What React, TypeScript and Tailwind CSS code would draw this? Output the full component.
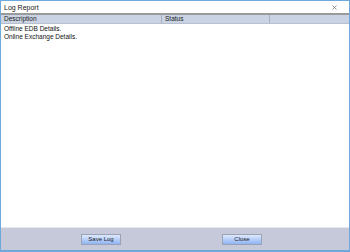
import React from 'react';
import { X } from 'lucide-react';

const ROWS = ['Offline EDB Details.', 'Online Exchange Details.'];

export default function App() {
  return (
    <div className="w-[350px] h-[252px] flex flex-col bg-[#6fa8dc] px-px pt-px pb-[2px] text-black" style={{ fontFamily: '"Liberation Sans", Arial, sans-serif' }}>
      {/* title bar */}
      <div className="h-[12px] bg-white flex items-center justify-between pl-[3px] pr-[11px]">
        <span className="text-[7px] leading-none text-[#222]">Log Report</span>
        <X className="w-[7px] h-[7px] text-[#555]" strokeWidth={2} />
      </div>

      {/* list */}
      <div className="flex-1 flex flex-col bg-white border-t-[2px] border-[#9a9a9a]">
        <div className="h-[9px] flex bg-[#c9d3e4] border-b border-[#b8c0cf] text-[6.5px] leading-none text-[#222]">
          <div className="w-[161px] flex items-center pl-[3px] border-r border-[#a9b0be]">Description</div>
          <div className="w-[108px] flex items-center pl-[3px] border-r border-[#a9b0be]">Status</div>
          <div className="flex-1" />
        </div>
        <div className="flex flex-col pt-[1px] pl-[3px] text-[6.5px] leading-[8px] text-[#111]">
          {ROWS.map(r => (
            <span key={r}>{r}</span>
          ))}
        </div>
      </div>

      {/* footer */}
      <div className="h-[23px] shrink-0 bg-[#c5c9d9] border-t border-[#e6e8ee] flex items-center">
        <div className="w-[80px]" />
        <button className="w-[40px] h-[11px] border border-[#9aa3b5] bg-gradient-to-b from-[#dfe9fb] to-[#8fb4f3] text-[6px] leading-none text-[#222]">Save Log</button>
        <div className="w-[101px]" />
        <button className="w-[40px] h-[11px] border border-[#9aa3b5] bg-gradient-to-b from-[#dfe9fb] to-[#8fb4f3] text-[6px] leading-none text-[#222]">Close</button>
      </div>
    </div>
  );
}
